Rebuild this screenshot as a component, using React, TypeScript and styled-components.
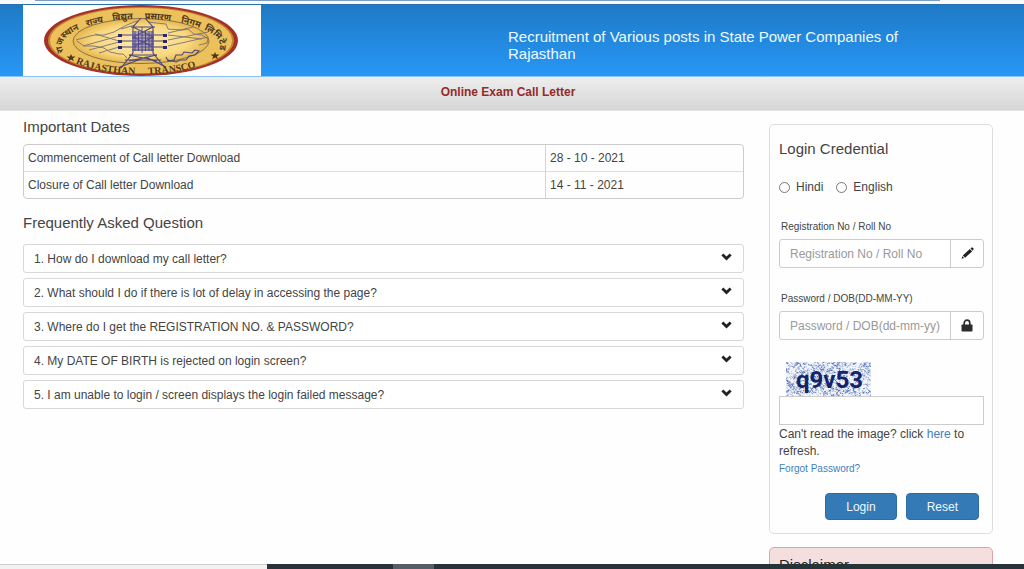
import React from "react";
import styled, { createGlobalStyle } from "styled-components";

const GlobalStyle = createGlobalStyle`
  *, *::before, *::after { box-sizing: border-box; }
  body {
    margin: 0;
    background: #fefefe;
    color: #444;
    font-family: "Liberation Sans", Arial, sans-serif;
    font-size: 12px;
    line-height: 17px;
  }
  h1, h2, p, ul { margin: 0; padding: 0; font-weight: normal; }
  ul { list-style: none; }
  input, button { font-family: inherit; }
`;

const Page = styled.div`
  display: flex;
  flex-direction: column;
  height: 100vh;
  overflow: hidden;
`;

const TopStrip = styled.div`
  flex: none;
  height: 4px;
  padding: 0 84px 0 35px;
  background: #f8fbfe;

  &::before {
    content: "";
    display: block;
    height: 1px;
    background: #7b9cc4;
  }
`;

const Banner = styled.header`
  flex: none;
  display: grid;
  grid-template-columns: 485fr 516fr;
  height: 73px;
  padding-left: 23px;
  border-top: 1px solid #2a70ad;
  border-bottom: 1px solid #8cc3f5;
  background: linear-gradient(#1f7ac6, #2797f6);
`;

const LogoBox = styled.div`
  width: 238px;
  height: 71px;
  background: #fff;

  svg { display: block; }
`;

const BannerTitle = styled.h1`
  align-self: center;
  max-width: 420px;
  padding-top: 9px;
  color: #eefaff;
  font-size: 15px;
  line-height: 17px;
`;

const SubBar = styled.div`
  flex: none;
  height: 34px;
  padding: 7px 8px 0 0;
  border-bottom: 1px solid #e2e2e2;
  background: linear-gradient(#eee, #d6d6d6);
  color: #942b2b;
  font-size: 12px;
  font-weight: bold;
  text-align: center;
`;

const Content = styled.main`
  flex: 1;
  min-height: 0;
  display: grid;
  grid-template-columns: minmax(0, 721fr) minmax(0, 224fr);
  column-gap: 25px;
  align-items: start;
  padding: 0 31px 0 23px;
`;

const Heading = styled.h2`
  color: #444;
  font-size: 15px;
  line-height: 24px;
`;

const Info = styled.section`
  display: flex;
  flex-direction: column;
  padding-top: 4px;
`;

const DateTable = styled.table`
  width: 100%;
  margin: 5px 0 12px;
  border: 1px solid #ccc;
  border-radius: 4px;
  border-spacing: 0;
  table-layout: fixed;

  th, td {
    height: 26px;
    padding: 0 4px;
    text-align: left;
    font-weight: normal;
  }
  th { width: 521px; }
  td { border-left: 1px solid #d4d4d4; }
  tr + tr > * { border-top: 1px solid #ddd; height: 27px; }
`;

const FaqList = styled.ul`
  display: flex;
  flex-direction: column;
  gap: 5px;
  margin-top: 9px;
`;

const FaqButton = styled.button`
  display: flex;
  align-items: center;
  justify-content: space-between;
  width: 100%;
  height: 29px;
  padding: 0 11px 0 10px;
  border: 1px solid #d8d8d8;
  border-radius: 3px;
  background: #fff;
  color: #444;
  font-size: 12px;
  text-align: left;

  svg { flex: none; margin-bottom: 3px; }
`;

const Side = styled.aside`
  display: flex;
  flex-direction: column;
  gap: 13px;
  padding-top: 13px;
`;

const Card = styled.form`
  display: flex;
  flex-direction: column;
  padding: 12px 8px 13px 9px;
  border: 1px solid #ddd;
  border-radius: 5px;
  background: #fefefe;
`;

const RadioRow = styled.div`
  display: flex;
  gap: 13px;
  margin-top: 16px;
  line-height: 20px;

  label { display: flex; align-items: center; gap: 6px; }
  input {
    appearance: none;
    width: 11px;
    height: 11px;
    margin: 0;
    border: 1px solid #777;
    border-radius: 50%;
    background: #fff;
  }
  input:checked { border: 4px solid #337ab7; }
`;

const Fields = styled.div`
  display: flex;
  flex-direction: column;
  gap: 23px;
  margin-top: 22px;
`;

const Field = styled.div`
  display: flex;
  flex-direction: column;
  gap: 4px;

  label {
    padding-left: 2px;
    font-size: 10px;
    line-height: 16px;
  }
`;

const InputGroup = styled.div`
  display: flex;
  height: 29px;
  border: 1px solid #ccc;
  border-radius: 3px;
  background: #fff;

  input {
    flex: 1;
    min-width: 0;
    padding: 0 10px;
    border: 0;
    background: none;
    color: #444;
    font-size: 12px;
  }
  input::placeholder { color: #999; opacity: 1; }
`;

const Addon = styled.span`
  display: flex;
  align-items: center;
  justify-content: center;
  width: 33px;
  padding-bottom: 1px;
  border-left: 1px solid #ccc;
`;

const CaptchaPicture = styled.svg`
  display: block;
  margin: 22px 0 0 7px;
`;

const CaptchaInput = styled.input`
  width: 100%;
  height: 29px;
  padding: 0 10px;
  border: 1px solid #ccc;
  background: #fff;
  font-size: 12px;
`;

const Hint = styled.p`
  margin: 1px 0;
`;

const Link = styled.a<{ $small?: boolean }>`
  color: #3f7fbf;
  font-size: ${(p) => (p.$small ? "10px" : "12px")};
  line-height: ${(p) => (p.$small ? "16px" : "17px")};
  text-decoration: none;
`;

const Actions = styled.div`
  display: flex;
  justify-content: flex-end;
  gap: 9px;
  margin: 16px 5px 0 0;
`;

const ActionButton = styled.button`
  height: 27px;
  padding: 0 20px;
  border: 1px solid #2e6da4;
  border-radius: 4px;
  background: #337ab7;
  color: #eef8ff;
  font-size: 12px;
`;

const Disclaimer = styled.section`
  padding: 5px 9px;
  border: 1px solid #dfa3a6;
  border-radius: 5px;
  background: #f5dede;

  h2 { color: #222; }
`;

const Taskbar = styled.footer`
  position: relative;
  flex: none;
  display: grid;
  grid-template-columns: 267fr 126fr 41fr 590fr;
  height: 5px;
  background: #22303a;
`;

const TaskbarPart = styled.div<{ $kind: "search" | "dark" | "active" }>`
  border-top: ${(p) => (p.$kind === "search" ? "1px solid #ccc" : "0")};
  background: ${(p) =>
    ({ search: "#f2f2f2", dark: "#263439", active: "#555f65" })[p.$kind]};
`;

const upperWords = [
  { word: "राजस्थान", offset: "0%" },
  { word: "राज्य", offset: "21%" },
  { word: "विद्युत", offset: "35%" },
  { word: "प्रसारण", offset: "52%" },
  { word: "निगम", offset: "71%" },
  { word: "लिमिटेड", offset: "84%" },
];

const lowerWords = [
  { word: "RAJASTHAN", offset: "2%" },
  { word: "TRANSCO", offset: "54%" },
];

function TranscoLogo() {
  return (
    <svg width="238" height="71" viewBox="0 0 238 71" role="img" aria-label="Rajasthan Transco">
      <defs>
        <radialGradient id="gold">
          <stop offset="0" stopColor="#fdebb4" />
          <stop offset="0.7" stopColor="#f8d981" />
          <stop offset="1" stopColor="#e6b64e" />
        </radialGradient>
        <path id="upperArc" d="M41 47 A79 27 0 1 1 195 47" />
        <path id="lowerArc" d="M50 57 A84 30 0 0 0 188 56" />
      </defs>
      <ellipse cx="118" cy="35.500" rx="97" ry="35.500" fill="#a3332a" />
      <ellipse cx="118" cy="35.500" rx="93" ry="33.500" fill="#c8842f" />
      <ellipse cx="118" cy="35.500" rx="91" ry="32.500" fill="#ecc05a" />
      <ellipse cx="118" cy="36" rx="68" ry="22.500" fill="url(#gold)" stroke="#7d6a4a" strokeWidth="0.9" />
      <text fill="#50371c" fontSize="9" fontWeight="bold" fontFamily="'Noto Sans', 'Noto Sans Devanagari', 'Liberation Sans', sans-serif">
        {upperWords.map((w) => (
          <textPath key={w.word} href="#upperArc" startOffset={w.offset}>
            {w.word}
          </textPath>
        ))}
      </text>
      <text fill="#50371c" fontSize="10" fontWeight="bold" fontFamily="'Liberation Serif', serif">
        {lowerWords.map((w) => (
          <textPath key={w.word} href="#lowerArc" startOffset={w.offset}>
            {w.word}
          </textPath>
        ))}
      </text>
      <path d="M48 49l1.200 2.600 3.300 0-2.600 1.800 1 2.800-2.900-1.700-2.900 1.700 1-2.800-2.600-1.800 3.300 0z M192 47l1.200 2.600 3.300 0-2.600 1.800 1 2.800-2.900-1.700-2.900 1.700 1-2.800-2.600-1.800 3.300 0z" fill="#50371c" />
      <g fill="none" stroke="#7b7073" strokeWidth="0.900">
        <path d="M53 35l14-4 5-1 9 0 10-3 7-4 6-3 7-3 4-1M126 17l7 1 10 1 2 5 14 1 6-1 6 5 8 1 6 4-1 4-8 2" />
        <path d="M54 36l7 5 10 0 10 2 6 4 9 2 4 0 4 4" />
        <path d="M72 29l24 7M60 41l36-10M66 45l30-8M76 48l20-6M98 24l14-4M145 30l34 4M145 35l40-8M145 41l40-9M145 28l25-6" />
      </g>
      <g fill="none" stroke="#4b4478" strokeWidth="1.100">
        <path d="M118 13l-8 9v26l-12 15M122 13l8 9v26l12 15M98 30h44M98 36h44M98 42h44M108 22h24M106 50h28M102 55h36" />
        <path d="M97 62l26-10 20 10M106 50l28 6M134 50l-28 6M110 22l20 10-20 10M130 22l-20 10 20 10" />
        <path d="M143 52l2 4 6-1 2-5 6 0 2-3 8 1 3-3 4 1-4 4-6 1-3 4-6 0-4 2-8-2" />
      </g>
      <path d="M95 29h4v3h-4zM95 35h4v3h-4zM95 41h4v3h-4zM140 29h4v3h-4zM140 35h4v3h-4zM140 41h4v3h-4z" fill="#2d2866" />
      <path d="M109 26h22v20h-22z" fill="#6763a8" opacity="0.500" />
      <path d="M112 26v20M115.500 26v20M119 22v26M122.500 26v20M126 26v20M129 26v20M109 33h22M109 39h22M109 45h22" fill="none" stroke="#474291" strokeWidth="0.900" />
    </svg>
  );
}

function ChevronIcon() {
  return (
    <svg width="11" height="8" viewBox="0 0 11 8" aria-hidden="true">
      <path d="M0.400 2.400L2.300 0.500 5.500 3.500 8.700 0.500 10.600 2.400 5.500 7.400z" fill="#222" />
    </svg>
  );
}

function PencilIcon() {
  return (
    <svg width="13" height="12" viewBox="0 0 13 12" aria-hidden="true">
      <path d="M0.500 11.700L1.300 9.200 3.200 11.100zM1.800 8.400L8.800 2.100 11.100 4.400 4.100 10.700zM9.500 1.600L10.600 0.600q0.500-0.400 1 0l0.900 0.900q0.400 0.500 0 1L11.600 3.700z" fill="#222" />
    </svg>
  );
}

function LockIcon() {
  return (
    <svg width="12" height="13" viewBox="0 0 12 13" aria-hidden="true">
      <path d="M3.200 6V4a2.800 2.800 0 0 1 5.600 0v2" fill="none" stroke="#2b2b2b" strokeWidth="1.700" />
      <rect x="0.500" y="5.500" width="11" height="7" rx="0.800" fill="#2b2b2b" />
    </svg>
  );
}

// Seeded noise, so that the speckles stay the same from one render to the next.
function speckles(count: number, width: number, height: number, seed: number) {
  let state = seed;
  const next = () => {
    state = (state * 1664525 + 1013904223) % 4294967296;
    return state / 4294967296;
  };
  let d = "";
  for (let i = 0; i < count; i++) {
    const x = (next() * width).toFixed(1);
    const y = (next() * height).toFixed(1);
    const dx = (next() * 4 - 2).toFixed(1);
    const dy = (next() * 3 - 1.5).toFixed(1);
    d += `M${x} ${y}l${dx} ${dy}`;
  }
  return d;
}

const paleNoise = speckles(600, 85, 34, 7);
const darkNoise = speckles(520, 85, 34, 91);

function Captcha() {
  return (
    <CaptchaPicture width="85" height="34" viewBox="0 0 85 34" role="img" aria-label="Captcha">
      <rect width="85" height="34" fill="#f3f6fb" />
      <path d={paleNoise} stroke="#9fb2da" strokeWidth="0.8" />
      <path d={darkNoise} stroke="#4d69ad" strokeWidth="0.9" />
      <text x="10" y="26" fill="#14246b" fontSize="24" fontWeight="bold" fontFamily="'Liberation Sans Narrow', Roboto, sans-serif">
        q9v53
      </text>
    </CaptchaPicture>
  );
}

const dates = [
  { event: "Commencement of Call letter Download", day: "28 - 10 - 2021" },
  { event: "Closure of Call letter Download", day: "14 - 11 - 2021" },
];

const questions = [
  "1. How do I download my call letter?",
  "2. What should I do if there is lot of delay in accessing the page?",
  "3. Where do I get the REGISTRATION NO. & PASSWORD?",
  "4. My DATE OF BIRTH is rejected on login screen?",
  "5. I am unable to login / screen displays the login failed message?",
];

export default function App() {
  return (
    <Page>
      <GlobalStyle />
      <TopStrip />
      <Banner>
        <LogoBox>
          <TranscoLogo />
        </LogoBox>
        <BannerTitle>Recruitment of Various posts in State Power Companies of Rajasthan</BannerTitle>
      </Banner>
      <SubBar>Online Exam Call Letter</SubBar>
      <Content>
        <Info>
          <Heading>Important Dates</Heading>
          <DateTable>
            <tbody>
              {dates.map((d) => (
                <tr key={d.event}>
                  <th scope="row">{d.event}</th>
                  <td>{d.day}</td>
                </tr>
              ))}
            </tbody>
          </DateTable>
          <Heading>Frequently Asked Question</Heading>
          <FaqList>
            {questions.map((q) => (
              <li key={q}>
                <FaqButton type="button" aria-expanded={false}>
                  {q}
                  <ChevronIcon />
                </FaqButton>
              </li>
            ))}
          </FaqList>
        </Info>
        <Side>
          <Card onSubmit={(e) => e.preventDefault()}>
            <Heading>Login Credential</Heading>
            <RadioRow>
              <label>
                <input type="radio" name="language" value="hi" />
                Hindi
              </label>
              <label>
                <input type="radio" name="language" value="en" />
                English
              </label>
            </RadioRow>
            <Fields>
              <Field>
                <label htmlFor="registration">Registration No / Roll No</label>
                <InputGroup>
                  <input id="registration" type="text" placeholder="Registration No / Roll No" />
                  <Addon>
                    <PencilIcon />
                  </Addon>
                </InputGroup>
              </Field>
              <Field>
                <label htmlFor="password">Password / DOB(DD-MM-YY)</label>
                <InputGroup>
                  <input id="password" type="password" placeholder="Password / DOB(dd-mm-yy)" />
                  <Addon>
                    <LockIcon />
                  </Addon>
                </InputGroup>
              </Field>
            </Fields>
            <Captcha />
            <CaptchaInput type="text" aria-label="Text in the image" />
            <Hint>
              Can't read the image? click <Link href="#refresh">here</Link> to refresh.
            </Hint>
            <Link $small href="#forgot">Forgot Password?</Link>
            <Actions>
              <ActionButton type="submit">Login</ActionButton>
              <ActionButton type="reset">Reset</ActionButton>
            </Actions>
          </Card>
          <Disclaimer>
            <Heading>Disclaimer</Heading>
          </Disclaimer>
        </Side>
      </Content>
      <Taskbar>
        <TaskbarPart $kind="search" />
        <TaskbarPart $kind="dark" />
        <TaskbarPart $kind="active" />
        <TaskbarPart $kind="dark" />
      </Taskbar>
    </Page>
  );
}
